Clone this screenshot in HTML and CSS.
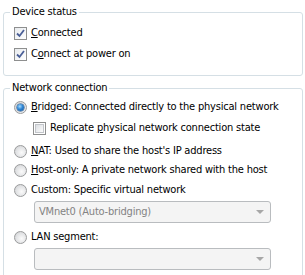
FILE: index.html
```html
<!DOCTYPE html>
<html lang="en">
<head>
    <meta charset="UTF-8">
    <title>Network Adapter</title>
    <link rel="stylesheet" href="styles.css">
</head>
<body>
    <div class="page">
        <fieldset class="group status-group">
            <legend>Device status</legend>
            <label class="row first">
                <span class="check checked"><svg width="9" height="9" viewBox="0 0 9 9"><path d="M1 4.5 L3.5 7 L8 1" fill="none" stroke="#4a5f97" stroke-width="1.8"/></svg></span>
                <span><u>C</u>onnected</span>
            </label>
            <label class="row second">
                <span class="check checked"><svg width="9" height="9" viewBox="0 0 9 9"><path d="M1 4.5 L3.5 7 L8 1" fill="none" stroke="#4a5f97" stroke-width="1.8"/></svg></span>
                <span>C<u>o</u>nnect at power on</span>
            </label>
        </fieldset>

        <fieldset class="group network-group">
            <legend>Network connection</legend>
            <label class="row bridged">
                <span class="radio selected"></span>
                <span><u>B</u>ridged: Connected directly to the physical network</span>
            </label>
            <label class="row indent gap7">
                <span class="check"></span>
                <span>Replicate <u>p</u>hysical network connection state</span>
            </label>
            <label class="row gap9">
                <span class="radio"></span>
                <span><u>N</u>AT: Used to share the host's IP address</span>
            </label>
            <label class="row gap5">
                <span class="radio"></span>
                <span><u>H</u>ost-only: A private network shared with the host</span>
            </label>
            <label class="row gap6">
                <span class="radio"></span>
                <span>Custom: Specific virtual network</span>
            </label>
            <div class="select first-select">
                <span>VMnet0 (Auto-bridging)</span>
                <span class="arrow"></span>
            </div>
            <label class="row gap7">
                <span class="radio"></span>
                <span>LAN segment:</span>
            </label>
            <div class="select second-select">
                <span></span>
                <span class="arrow"></span>
            </div>
        </fieldset>
    </div>
</body>
</html>
```

FILE: styles.css
```css
:root {
    --text: #000000;
    --group-border: #d5dfe5;
    --box-border: #8e8f8f;
    --disabled-text: #838383;
    --disabled-border: #b9bcbf;
    --disabled-bg: #f4f4f4;
}

body {
    margin: 0;
    background: #ffffff;
    font-family: Tahoma, 'DejaVu Sans Condensed', 'Liberation Sans', sans-serif;
    font-size: 11px;
    line-height: 14px;
    letter-spacing: -0.2px;
    color: var(--text);
}

.page {
    padding: 5px 2px 0 3px;
}

.group {
    margin: 0;
    border: 1px solid var(--group-border);
    border-radius: 3px;
    padding: 0 0 14px 10px;
    min-width: 0;
}

.group legend {
    padding: 0 2px;
    margin-left: -4px;
}

.network-group {
    margin-top: 5px;
    padding-bottom: 20px;
}

.row {
    display: flex;
    align-items: center;
    gap: 4px;
    height: 14px;
    margin-top: 6px;
    white-space: nowrap;
}

.row.first { margin-top: 7px; }
.row.second { margin-top: 7px; }
.row.bridged { margin-top: 5px; }
.row.gap9 { margin-top: 9px; }
.row.gap7 { margin-top: 7px; }
.row.gap6 { margin-top: 6px; }
.row.gap5 { margin-top: 5px; }

.row.indent {
    padding-left: 19px;
}

.row u {
    text-decoration-thickness: 1px;
    text-underline-offset: 1px;
}

/* checkbox */
.check {
    width: 13px;
    height: 13px;
    box-sizing: border-box;
    border: 1px solid var(--box-border);
    background: #ffffff;
    padding: 1px;
    display: flex;
    flex-shrink: 0;
}

.check::before {
    content: "";
    flex: 1;
    border: 1px solid #c2c5ca;
    background: linear-gradient(135deg, #dcdfe3, #fbfbfb);
}

.check.checked::before {
    display: none;
}

.check.checked {
    background: linear-gradient(135deg, #e8ebee, #ffffff);
    align-items: center;
    justify-content: center;
    padding: 0;
}

/* radio */
.radio {
    width: 13px;
    height: 13px;
    box-sizing: border-box;
    border-radius: 50%;
    border: 1px solid #9a9b9c;
    background: radial-gradient(circle at 60% 60%, #fbfbfb 0, #e2e3e5 55%, #c9cbcd 100%);
    flex-shrink: 0;
    position: relative;
}

.radio.selected::after {
    content: "";
    position: absolute;
    left: 2px;
    top: 2px;
    width: 7px;
    height: 7px;
    border-radius: 50%;
    background: radial-gradient(circle at 40% 35%, #a6dcff 0, #2f86d4 45%, #0f4f95 100%);
    box-shadow: 0 0 0 0.5px #1d4f82;
}

/* disabled dropdown */
.select {
    display: flex;
    align-items: center;
    justify-content: space-between;
    box-sizing: border-box;
    width: 237px;
    height: 22px;
    margin-left: 20px;
    margin-top: 4px;
    padding: 0 6px 0 4px;
    border: 1px solid var(--disabled-border);
    border-radius: 3px;
    background: var(--disabled-bg);
    color: var(--disabled-text);
    white-space: nowrap;
}

.second-select {
    margin-top: 4px;
}

.arrow {
    width: 0;
    height: 0;
    border-left: 4px solid transparent;
    border-right: 4px solid transparent;
    border-top: 4px solid #a7a7a7;
}
```
